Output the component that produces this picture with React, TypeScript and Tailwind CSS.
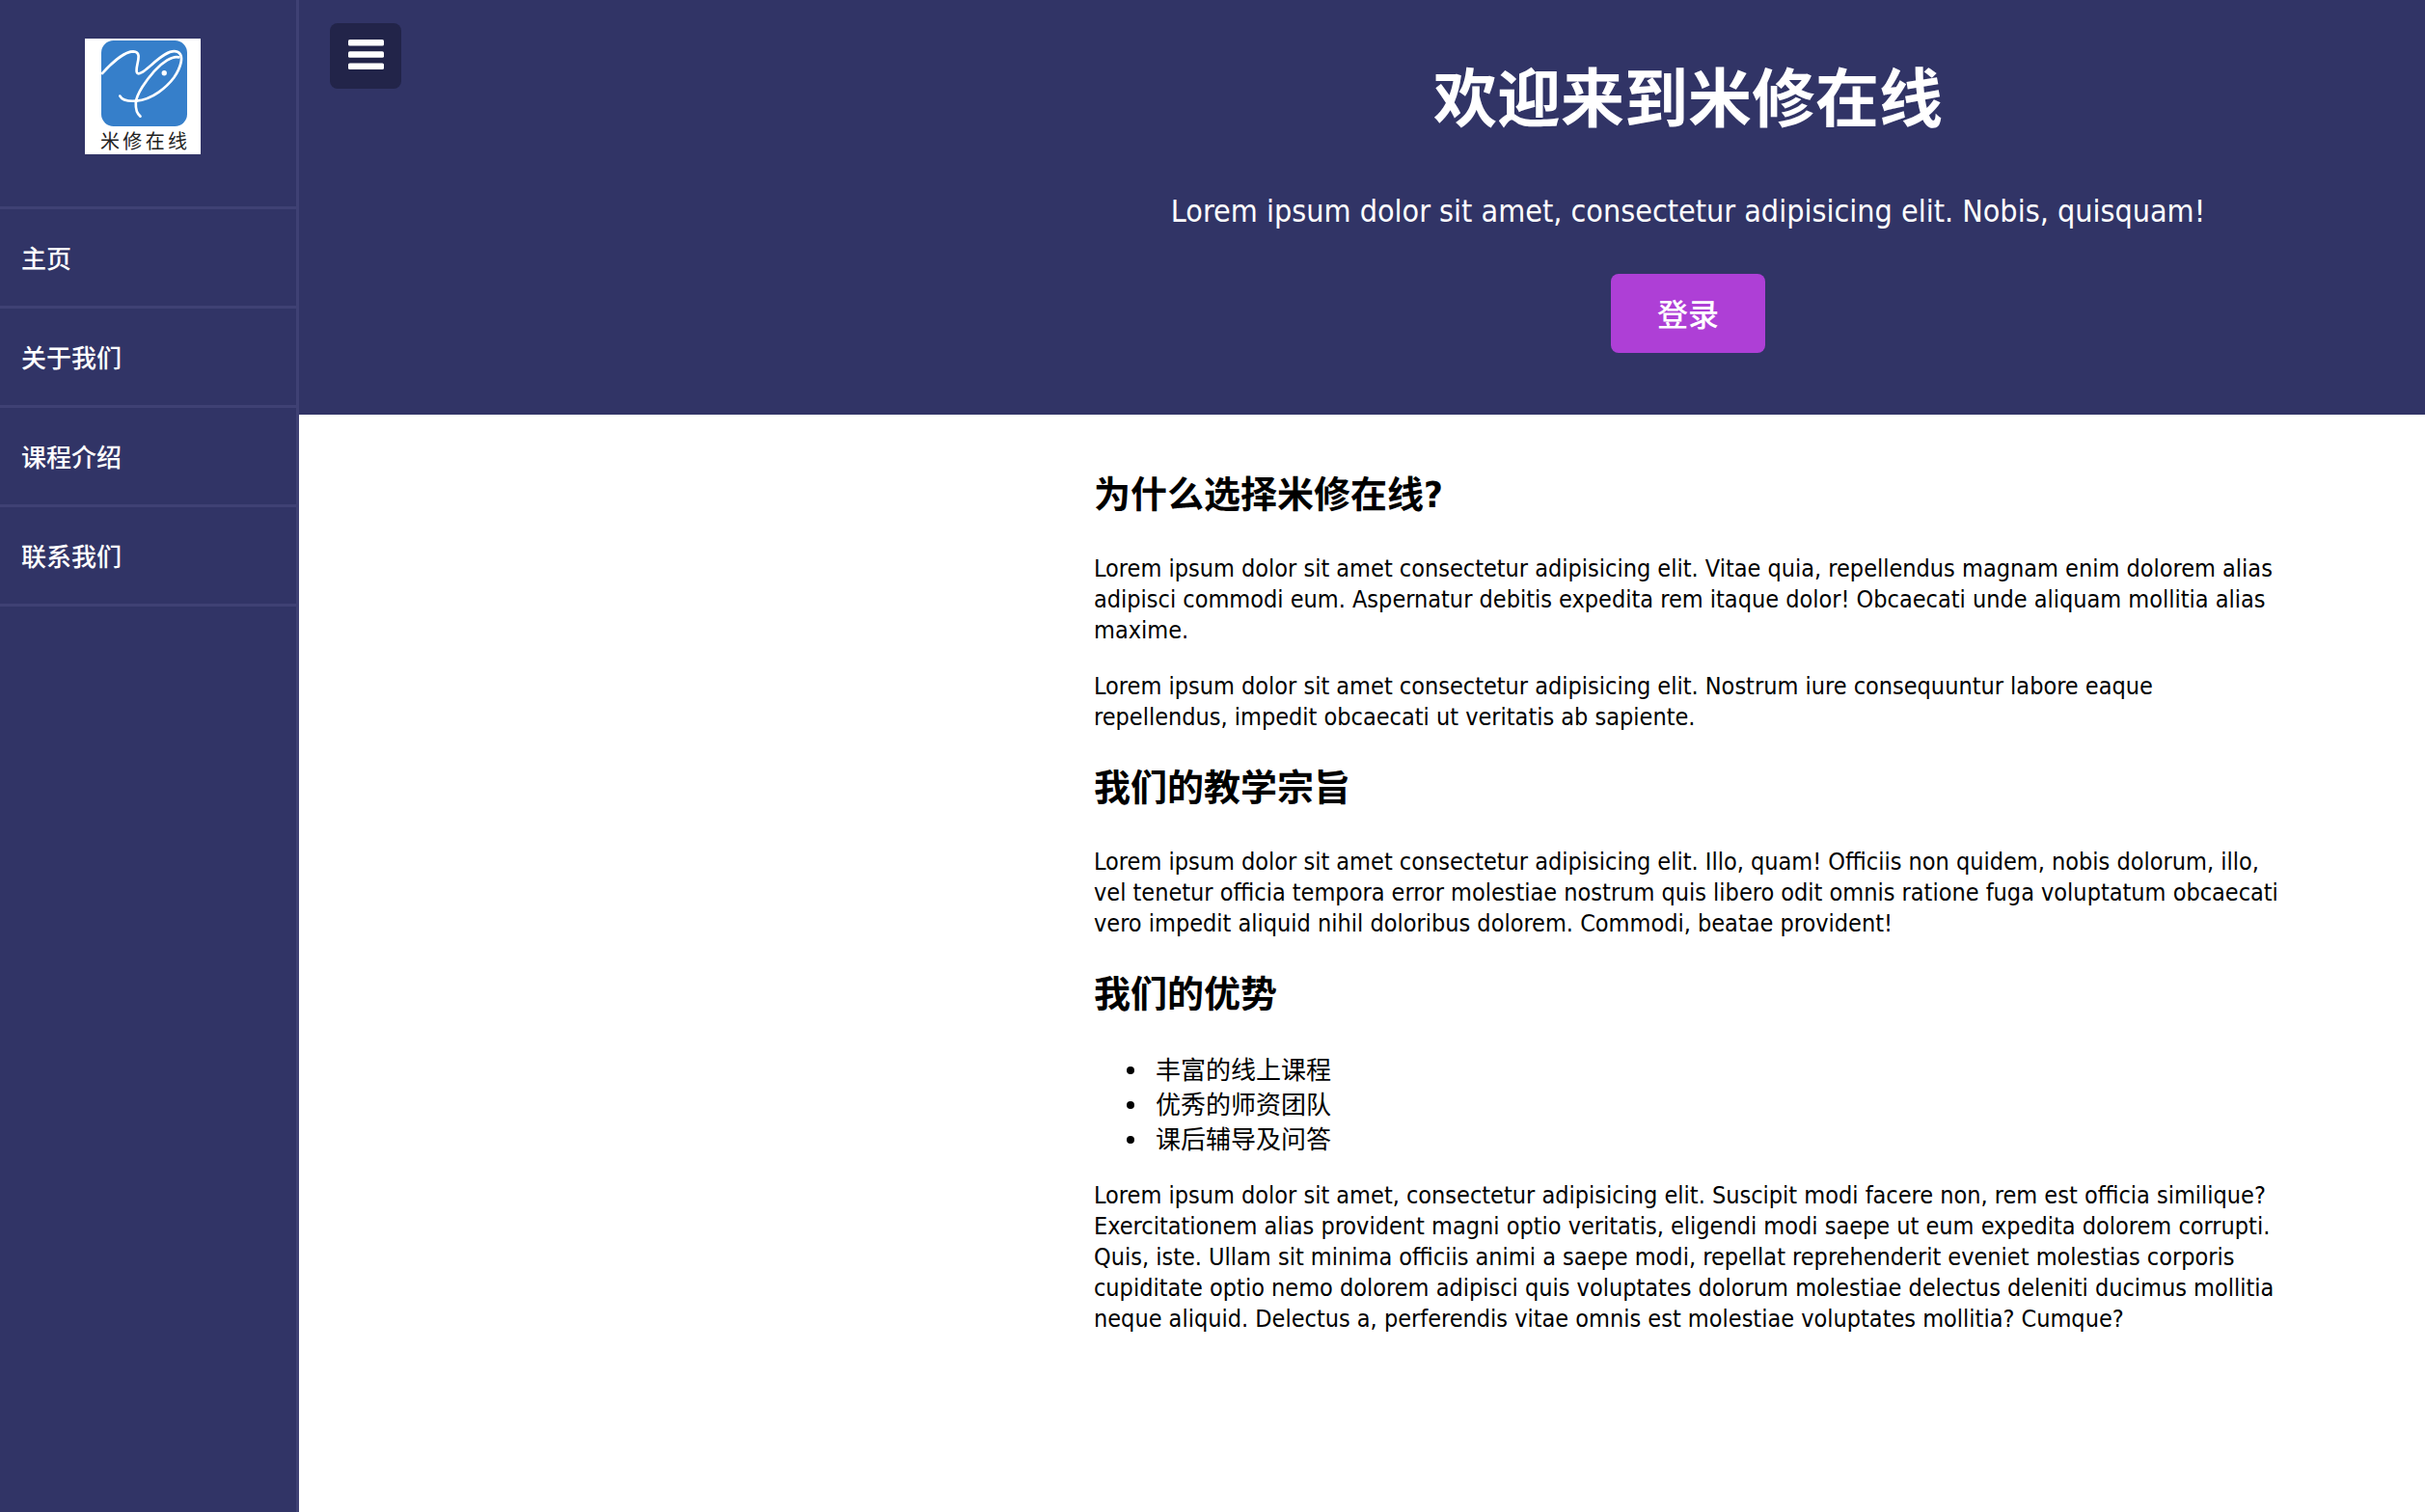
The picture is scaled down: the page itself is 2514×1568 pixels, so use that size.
import { useState } from "react";

const navItems = ["主页", "关于我们", "课程介绍", "联系我们"];
const advantages = ["丰富的线上课程", "优秀的师资团队", "课后辅导及问答"];

function Logo() {
  return (
    <a href="#" aria-label="米修在线" className="flex size-[120px] flex-col items-end bg-white pt-[2px] pr-[14px] font-normal text-[#222222]">
      <svg viewBox="0 0 266 266" className="size-[89px] shrink-0" fill="none" stroke="#ffffff" strokeWidth="8" strokeLinecap="round" aria-hidden="true">
        <rect width="266" height="266" rx="38" fill="#367fca" stroke="none" />
        <path d="M3 102C30 72 72 34 99 34C132 35 104 80 110 98C114 112 138 90 155 76C184 50 214 26 236 35C260 46 244 88 225 115C204 143 159 183 109 187C82 189 64 184 58 172" />
        <path d="M240 52C221 46 189 68 164 95C139 123 109 166 107 193C106 213 110 226 121 235" />
        <circle cx="195" cy="101" r="8" fill="#ffffff" stroke="none" />
      </svg>
      <span className="flex w-[90px] justify-between pt-[2px] text-[20px] leading-[28px]">
        {[..."米修在线"].map((char) => (
          <span key={char}>{char}</span>
        ))}
      </span>
    </a>
  );
}

function Sidebar() {
  return (
    <nav className="w-[310px] shrink-0 border-r-[3px] border-[#3f4174] bg-[#313466] font-medium text-white">
      <div className="flex justify-center border-b-[3px] border-[#3f4174] pt-10 pr-[11px] pb-[54px]">
        <Logo />
      </div>
      <ul>
        {navItems.map((item) => (
          <li key={item} className="border-b-[3px] border-[#3f4174]">
            <a href="#" className="block px-[22px] pt-1 text-[26px] leading-[96px]">
              {item}
            </a>
          </li>
        ))}
      </ul>
    </nav>
  );
}

function Header({ onToggle }: { onToggle: () => void }) {
  return (
    <header className="relative bg-[#313466] pt-14 pb-16 pl-[676px] text-center text-white">
      <button
        type="button"
        aria-label="菜单"
        onClick={onToggle}
        className="absolute top-6 left-8 flex h-[68px] w-[74px] justify-center rounded-lg bg-[#222449] pt-[17px]"
      >
        <svg viewBox="0 0 37 31" className="h-[31px] w-[37px]" fill="#ffffff" aria-hidden="true">
          <rect y="0" width="37" height="6.6" rx="1.6" />
          <rect y="12.2" width="37" height="6.6" rx="1.6" />
          <rect y="24.4" width="37" height="6.6" rx="1.6" />
        </svg>
      </button>
      <h1 className="text-[66px] leading-[96px] font-bold">欢迎来到米修在线</h1>
      <p className="mt-[46px] text-[32px] leading-[42px]">
        Lorem ipsum dolor sit amet, consectetur adipisicing elit. Nobis, quisquam!
      </p>
      <button type="button" className="mt-11 rounded-lg bg-[#ae3fd6] px-12 pt-1 text-[32px] leading-[78px] font-medium">
        登录
      </button>
    </header>
  );
}

function Heading({ children }: { children: string }) {
  return <h2 className="mt-[30px] mb-[34px] text-[38px] leading-[54px] font-bold">{children}</h2>;
}

export default function App() {
  const [open, setOpen] = useState(true);

  return (
    <div className="flex min-h-screen bg-white font-['DejaVu_Sans_Condensed','Noto_Sans_CJK_SC',sans-serif] text-black">
      {open && <Sidebar />}
      <div className="min-w-0 flex-1">
        <Header onToggle={() => setOpen(!open)} />
        <main className="pt-[26px] pl-[676px]">
          <div className="mx-auto max-w-[1232px] text-[25px] leading-[32px]">
            <Heading>为什么选择米修在线?</Heading>
            <p className="mb-[26px]">
              Lorem ipsum dolor sit amet consectetur adipisicing elit. Vitae quia, repellendus magnam enim dolorem
              alias adipisci commodi eum. Aspernatur debitis expedita rem itaque dolor! Obcaecati unde aliquam mollitia
              alias maxime.
            </p>
            <p>
              Lorem ipsum dolor sit amet consectetur adipisicing elit. Nostrum iure consequuntur labore eaque
              repellendus, impedit obcaecati ut veritatis ab sapiente.
            </p>
            <Heading>我们的教学宗旨</Heading>
            <p>
              Lorem ipsum dolor sit amet consectetur adipisicing elit. Illo, quam! Officiis non quidem, nobis dolorum,
              illo, vel tenetur officia tempora error molestiae nostrum quis libero odit omnis ratione fuga voluptatum
              obcaecati vero impedit aliquid nihil doloribus dolorem. Commodi, beatae provident!
            </p>
            <Heading>我们的优势</Heading>
            <ul className="mb-6 text-[26px] leading-[36px]">
              {advantages.map((item) => (
                <li
                  key={item}
                  className="flex items-center before:mr-[22px] before:ml-[34px] before:size-2 before:rounded-full before:bg-black"
                >
                  {item}
                </li>
              ))}
            </ul>
            <p>
              Lorem ipsum dolor sit amet, consectetur adipisicing elit. Suscipit modi facere non, rem est officia
              similique? Exercitationem alias provident magni optio veritatis, eligendi modi saepe ut eum expedita
              dolorem corrupti. Quis, iste. Ullam sit minima officiis animi a saepe modi, repellat reprehenderit
              eveniet molestias corporis cupiditate optio nemo dolorem adipisci quis voluptates dolorum molestiae
              delectus deleniti ducimus mollitia neque aliquid. Delectus a, perferendis vitae omnis est molestiae
              voluptates mollitia? Cumque?
            </p>
          </div>
        </main>
      </div>
    </div>
  );
}
